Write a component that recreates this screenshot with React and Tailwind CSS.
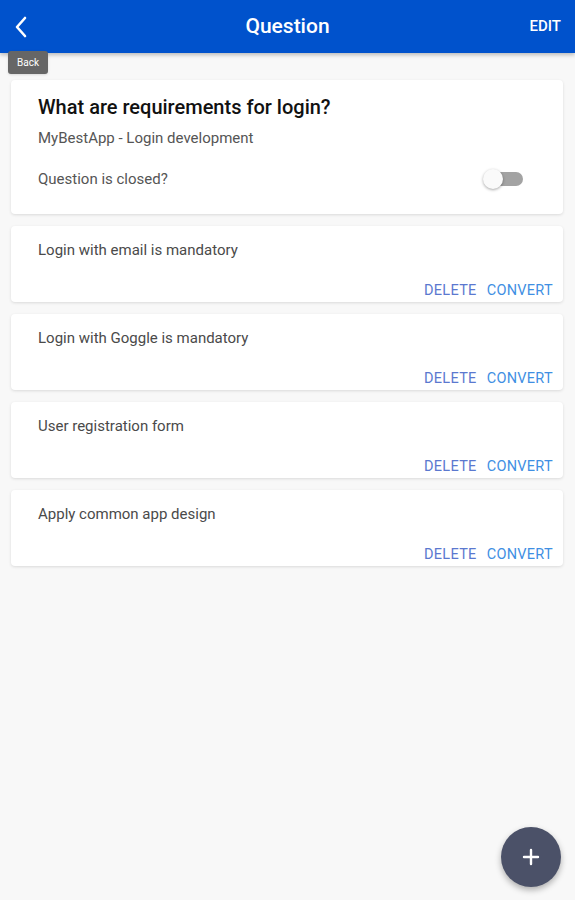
import React from 'react';

const items = [
  'Login with email is mandatory',
  'Login with Goggle is mandatory',
  'User registration form',
  'Apply common app design',
];

const Header = () => (
  <header className="relative h-[53px] bg-[#0052cc] flex items-center justify-between px-[10px] shadow-[0_2px_4px_rgba(0,0,0,0.25)] z-10">
    <button className="w-[22px] h-[30px] flex items-center justify-center text-white">
      <svg width="18" height="24" viewBox="0 0 18 24" fill="none">
        <path d="M13 3 L5 12 L13 21" stroke="white" strokeWidth="2.6" strokeLinecap="round" strokeLinejoin="round" />
      </svg>
    </button>
    <h1 className="absolute left-0 right-0 text-center text-white text-[21px] font-medium pointer-events-none">Question</h1>
    <span className="text-white text-[15px] font-medium pr-[4px]">EDIT</span>

    {/* tooltip for back */}
    <div className="absolute left-[8px] top-[51px] h-[23px] w-[40px] rounded-[3px] bg-[#666666] text-white text-[10px] flex items-center justify-center shadow">
      Back
    </div>
  </header>
);

const Toggle = () => (
  <div className="relative w-[40px] h-[20px] flex items-center">
    <div className="ml-[7px] w-[33px] h-[14px] rounded-full bg-[#a3a3a3]" />
    <div className="absolute left-0 top-0 w-[20px] h-[20px] rounded-full bg-[#fafafa] shadow-[0_1px_3px_rgba(0,0,0,0.35)]" />
  </div>
);

const ItemCard = ({ text }) => (
  <div className="bg-white rounded-[4px] shadow-[0_1px_3px_rgba(0,0,0,0.12)] h-[76px] pl-[27px] pr-[10px] pt-[14px] flex flex-col">
    <p className="text-[15px] leading-[20px] text-[#4a4a4a]">{text}</p>
    <div className="mt-auto mb-[1px] flex justify-end gap-[10px] text-[14.5px] leading-[20px] tracking-[0.3px]">
      <span className="text-[#5b78cf]">DELETE</span>
      <span className="text-[#3f8fe3]">CONVERT</span>
    </div>
  </div>
);

export default function App() {
  return (
    <div className="relative w-[575px] h-[900px] bg-[#f8f8f8] overflow-hidden" style={{ fontFamily: 'Roboto, "Noto Sans", sans-serif' }}>
      <Header />

      <main className="pl-[11px] pr-[12px] pt-[27px] flex flex-col gap-[12px]">
        <div className="bg-white rounded-[4px] shadow-[0_1px_3px_rgba(0,0,0,0.12)] pl-[27px] pr-[40px] pt-[15px] pb-[25px]">
          <h2 className="text-[20px] leading-[24px] font-medium text-[#111]">What are requirements for login?</h2>
          <p className="mt-[9px] text-[15px] leading-[20px] text-[#555]">MyBestApp - Login development</p>
          <div className="mt-[21px] flex items-center justify-between">
            <span className="text-[15px] leading-[20px] text-[#555]">Question is closed?</span>
            <Toggle />
          </div>
        </div>

        {items.map((t) => (
          <ItemCard key={t} text={t} />
        ))}
      </main>

      <button className="absolute left-[501px] top-[827px] w-[60px] h-[60px] rounded-full bg-[#4b5168] shadow-[0_3px_6px_rgba(0,0,0,0.3)] flex items-center justify-center">
        <svg width="18" height="18" viewBox="0 0 18 18">
          <path d="M9 2 V16 M2 9 H16" stroke="white" strokeWidth="2.4" strokeLinecap="round" />
        </svg>
      </button>
    </div>
  );
}
